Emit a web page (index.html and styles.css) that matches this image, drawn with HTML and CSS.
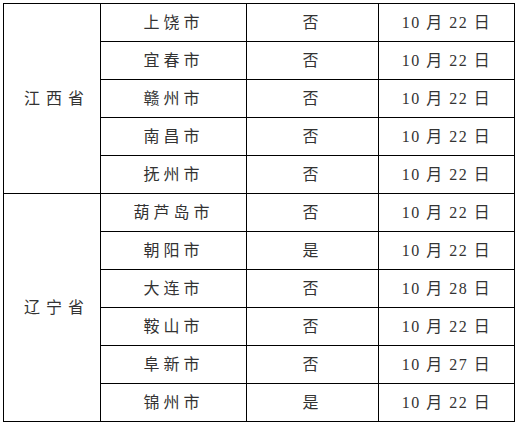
FILE: index.html
```html
<!DOCTYPE html>
<html lang="zh">
<head>
<meta charset="utf-8">
<link rel="stylesheet" href="styles.css">
</head>
<body>
<div class="page">
<table class="grid">
  <colgroup>
    <col class="c1"><col class="c2"><col class="c3"><col class="c4">
  </colgroup>
  <tbody>
    <tr><td class="prov" rowspan="5">江西省</td><td>上饶市</td><td>否</td><td class="date">10 月 22 日</td></tr>
    <tr><td>宜春市</td><td>否</td><td class="date">10 月 22 日</td></tr>
    <tr><td>赣州市</td><td>否</td><td class="date">10 月 22 日</td></tr>
    <tr><td>南昌市</td><td>否</td><td class="date">10 月 22 日</td></tr>
    <tr><td>抚州市</td><td>否</td><td class="date">10 月 22 日</td></tr>
    <tr><td class="prov" rowspan="6">辽宁省</td><td>葫芦岛市</td><td>否</td><td class="date">10 月 22 日</td></tr>
    <tr><td>朝阳市</td><td>是</td><td class="date">10 月 22 日</td></tr>
    <tr><td>大连市</td><td>否</td><td class="date">10 月 28 日</td></tr>
    <tr><td>鞍山市</td><td>否</td><td class="date">10 月 22 日</td></tr>
    <tr><td>阜新市</td><td>否</td><td class="date">10 月 27 日</td></tr>
    <tr><td>锦州市</td><td>是</td><td class="date">10 月 22 日</td></tr>
  </tbody>
</table>
</div>
</body>
</html>
```
FILE: styles.css
```css
html, body {
  margin: 0;
  padding: 0;
  background: #fff;
}
.page {
  padding: 3px 0 0 3px;
}
.grid {
  border-collapse: collapse;
  table-layout: fixed;
  width: 511px;
  font-family: "Liberation Serif", "Times New Roman", "DejaVu Serif", "Noto Sans CJK SC", serif;
  font-size: 16px;
  font-weight: normal;
  color: #333;
}
.c1 { width: 97px; }
.c2 { width: 146px; }
.c3 { width: 132px; }
.c4 { width: 136px; }
.grid td {
  border: 1px solid #000;
  height: 38px;
  padding: 0;
  text-align: center;
  vertical-align: middle;
  letter-spacing: 4px;
  line-height: 20px;
  white-space: nowrap;
  box-sizing: border-box;
}
.grid td.date {
  letter-spacing: 1.5px;
}
.grid td.prov {
  letter-spacing: 6px;
  padding-left: 10px;
}
```
